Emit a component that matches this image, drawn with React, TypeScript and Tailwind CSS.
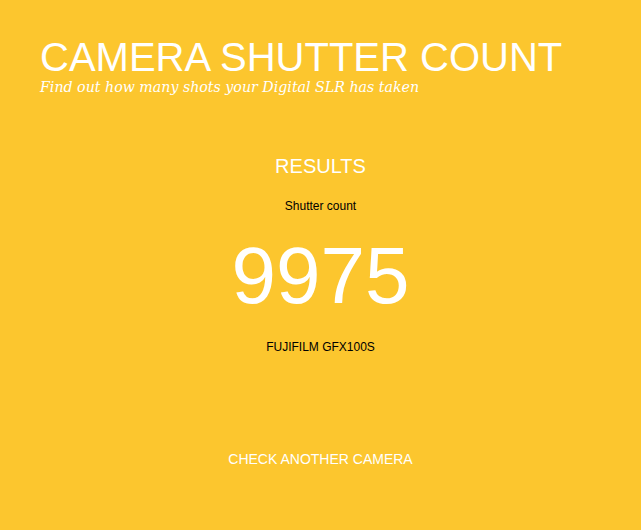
import React from 'react';

const App: React.FC = () => {
  return (
    <div className="min-h-screen bg-[#fcc62e] text-white font-['Liberation_Sans',Arial,sans-serif]">
      <header className="px-10 pt-[37px]">
        <h1 className="text-[40px] leading-[40px] font-normal uppercase">Camera Shutter Count</h1>
        <p className="font-['DejaVu_Serif',Georgia,serif] italic text-[14.2px] leading-[18px] mt-[1px]">
          Find out how many shots your Digital SLR has taken
        </p>
      </header>

      <main className="flex flex-col items-center text-center mt-[58px]">
        <h2 className="text-[20px] leading-[24px] uppercase">Results</h2>
        <div className="text-black text-[12px] leading-[14px] mt-[21px]">Shutter count</div>
        <div className="text-[80px] leading-[80px] mt-[23px]">9975</div>
        <div className="text-black text-[12px] leading-[14px] mt-[24px]">FUJIFILM GFX100S</div>
        <button className="text-[14px] leading-[16px] uppercase mt-[97px] cursor-pointer">
          Check another camera
        </button>
      </main>
    </div>
  );
};

export default App;
